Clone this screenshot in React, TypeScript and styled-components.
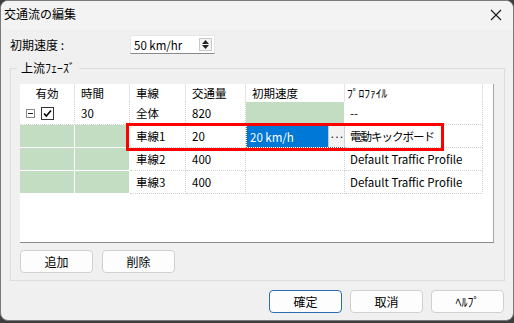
import styled, { createGlobalStyle } from 'styled-components';

const Global = createGlobalStyle`
  html, body {
    margin: 0;
    padding: 0;
    background: #3e3e3e;
  }
  body {
    font-family: 'Noto Sans CJK JP', 'Noto Sans', sans-serif;
    font-size: 12px;
    color: #000;
  }
`;

const Window = styled.div`
  width: 512px;
  height: 319px;
  display: flex;
  flex-direction: column;
  background: #f0f0f0;
  border: 1px solid #7a7a7a;
  border-radius: 8px;
  overflow: hidden;
`;

const TitleBar = styled.div`
  height: 28px;
  display: flex;
  align-items: center;
  justify-content: space-between;
  padding: 0 11px 0 3px;
  background: #f3f3f3;
`;

const Title = styled.span`
  font-size: 12px;
  line-height: 16px;
  margin-top: -2px;
`;

const SpeedRow = styled.div`
  display: flex;
  align-items: center;
  margin-top: 6px;
  padding-left: 9px;
`;

const FieldLabel = styled.span`
  width: 120px;
  line-height: 16px;
`;

const SpinBox = styled.div`
  width: 85px;
  height: 19px;
  box-sizing: border-box;
  display: flex;
  align-items: center;
  justify-content: space-between;
  padding: 0 2px 0 3px;
  background: #fff;
  border: 1px solid #e6e6e6;
  border-bottom-color: #8a8a8a;
  font-size: 11.5px;
`;

const SpinButtons = styled.div`
  width: 13px;
  height: 13px;
  box-sizing: border-box;
  border: 1px solid #c8c8c8;
  background: #f4f4f4;
  display: flex;
  flex-direction: column;
  align-items: center;
  justify-content: space-evenly;
`;

const GroupBox = styled.div`
  position: relative;
  margin: 14px 8px 0 9px;
  padding: 15px 10px 7px 9px;
  border: 1px solid #dcdcdc;
  display: flex;
  flex-direction: column;
  gap: 7px;
`;

const GroupLegend = styled.span`
  position: absolute;
  top: -9px;
  left: 6px;
  padding: 0 4px;
  line-height: 16px;
  background: #f0f0f0;
`;

const Grid = styled.div`
  position: relative;
  height: 158px;
  display: flex;
  flex-direction: column;
  background: #fff;
  border-right: 1px solid #a6a6a6;
  border-bottom: 1px solid #8c8c8c;
  font-size: 11.5px;
`;

const GridRow = styled.div<{ $header?: boolean }>`
  display: grid;
  grid-template-columns: 55px 55px 56px 60px 99px 138px 1fr;
  height: ${(p) => (p.$header ? '18px' : '23px')};
`;

const HeadCell = styled.div<{ $center?: boolean; $pad?: number; $last?: boolean }>`
  display: flex;
  align-items: center;
  justify-content: ${(p) => (p.$center ? 'center' : 'flex-start')};
  padding-left: ${(p) => (p.$center ? 0 : p.$pad ?? 6)}px;
  border-right: ${(p) => (p.$last ? 'none' : '1px solid #e4e4e4')};
  line-height: 16px;
  white-space: nowrap;
`;

const Cell = styled.div<{ $green?: boolean; $pad?: number; $tight?: boolean }>`
  display: flex;
  align-items: center;
  gap: 6px;
  padding-left: ${(p) => p.$pad ?? 6}px;
  background: ${(p) => (p.$green ? '#c2ddc2' : '#fff')};
  border-right: 1px ${(p) => (p.$green ? 'solid #fff' : 'dotted #d2d2d2')};
  border-bottom: 1px ${(p) => (p.$green ? 'solid #fff' : 'dotted #d2d2d2')};
  letter-spacing: ${(p) => (p.$tight ? '-1px' : 'normal')};
  white-space: nowrap;
  line-height: 16px;
`;

const Filler = styled.div`
  background: #fff;
`;

const EditCell = styled.div`
  display: flex;
  align-items: stretch;
  border: 1px dotted #606060;
  border-right-style: solid;
  border-right-color: #d2d2d2;
`;

const EditValue = styled.div`
  flex: 1;
  display: flex;
  align-items: center;
  padding-left: 3px;
  background: #0078d7;
  color: #fff;
  line-height: 16px;
`;

const EllipsisButton = styled.div`
  width: 15px;
  display: flex;
  align-items: center;
  justify-content: center;
  background: #f2f2f2;
  border-left: 1px solid #c8c8c8;
  font-size: 10px;
  letter-spacing: -1px;
`;

const Highlight = styled.div`
  position: absolute;
  left: 106px;
  top: 39px;
  width: 318px;
  height: 28px;
  box-sizing: border-box;
  border: 3px solid #ff0000;
  pointer-events: none;
`;

const ButtonRow = styled.div<{ $right?: boolean }>`
  display: flex;
  gap: ${(p) => (p.$right ? 8 : 9)}px;
  justify-content: ${(p) => (p.$right ? 'flex-end' : 'flex-start')};
`;

const Footer = styled.div`
  margin-top: 9px;
  padding-right: 9px;
`;

const Button = styled.button<{ $default?: boolean }>`
  width: 73px;
  height: 23px;
  padding: 0;
  font-family: inherit;
  font-size: 12px;
  color: #000;
  background: #fdfdfd;
  border: 1px solid ${(p) => (p.$default ? '#2e6db4' : '#d0d0d0')};
  border-radius: 4px;
`;

const lanes = [
  { lane: '車線2', amount: '400', profile: 'Default Traffic Profile' },
  { lane: '車線3', amount: '400', profile: 'Default Traffic Profile' },
];

function CloseIcon() {
  return (
    <svg width="12" height="12" viewBox="0 0 12 12">
      <path d="M1 1 L11 11 M11 1 L1 11" stroke="#1a1a1a" strokeWidth="1.1" fill="none" />
    </svg>
  );
}

function SpinArrows() {
  return (
    <SpinButtons>
      <svg width="7" height="4" viewBox="0 0 7 4">
        <path d="M0 4 L3.5 0 L7 4 Z" fill="#222" />
      </svg>
      <svg width="7" height="4" viewBox="0 0 7 4">
        <path d="M0 0 L7 0 L3.5 4 Z" fill="#222" />
      </svg>
    </SpinButtons>
  );
}

function CollapseBox() {
  return (
    <svg width="9" height="9" viewBox="0 0 9 9">
      <rect x="0.5" y="0.5" width="8" height="8" fill="#fff" stroke="#8a8a8a" />
      <path d="M2 4.5 H7" stroke="#222" strokeWidth="1" />
    </svg>
  );
}

function CheckBox() {
  return (
    <svg width="13" height="13" viewBox="0 0 13 13">
      <rect x="0.5" y="0.5" width="12" height="12" fill="#fff" stroke="#333" />
      <path d="M3 6.5 L5.3 9 L10 3.5" stroke="#000" strokeWidth="1.6" fill="none" />
    </svg>
  );
}

export default function App() {
  return (
    <>
      <Global />
      <Window>
        <TitleBar>
          <Title>交通流の編集</Title>
          <CloseIcon />
        </TitleBar>

        <SpeedRow>
          <FieldLabel>初期速度 :</FieldLabel>
          <SpinBox>
            <span>50 km/hr</span>
            <SpinArrows />
          </SpinBox>
        </SpeedRow>

        <GroupBox>
          <GroupLegend>上流ﾌｪｰｽﾞ</GroupLegend>
          <Grid>
            <GridRow $header>
              <HeadCell $center>有効</HeadCell>
              <HeadCell>時間</HeadCell>
              <HeadCell>車線</HeadCell>
              <HeadCell>交通量</HeadCell>
              <HeadCell>初期速度</HeadCell>
              <HeadCell $pad={2}>ﾌﾟﾛﾌｧｲﾙ</HeadCell>
              <HeadCell $last />
            </GridRow>

            <GridRow>
              <Cell>
                <CollapseBox />
                <CheckBox />
              </Cell>
              <Cell>30</Cell>
              <Cell>全体</Cell>
              <Cell>820</Cell>
              <Cell $green />
              <Cell $pad={5}>--</Cell>
              <Filler />
            </GridRow>

            <GridRow>
              <Cell $green />
              <Cell $green />
              <Cell>車線1</Cell>
              <Cell>20</Cell>
              <EditCell>
                <EditValue>20 km/h</EditValue>
                <EllipsisButton>···</EllipsisButton>
              </EditCell>
              <Cell $pad={5} $tight>
                電動キックボード
              </Cell>
              <Filler />
            </GridRow>

            {lanes.map((r) => (
              <GridRow key={r.lane}>
                <Cell $green />
                <Cell $green />
                <Cell>{r.lane}</Cell>
                <Cell>{r.amount}</Cell>
                <Cell />
                <Cell $pad={5}>{r.profile}</Cell>
                <Filler />
              </GridRow>
            ))}

            <Highlight />
          </Grid>

          <ButtonRow>
            <Button>追加</Button>
            <Button>削除</Button>
          </ButtonRow>
        </GroupBox>

        <Footer>
          <ButtonRow $right>
            <Button $default>確定</Button>
            <Button>取消</Button>
            <Button>ﾍﾙﾌﾟ</Button>
          </ButtonRow>
        </Footer>
      </Window>
    </>
  );
}
